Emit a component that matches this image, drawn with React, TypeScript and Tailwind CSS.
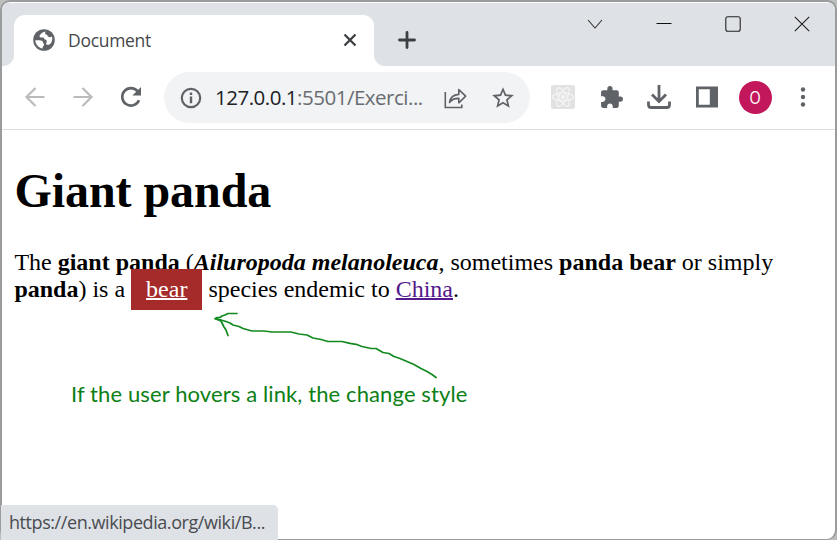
import React from "react";
import { MdExtension, MdStarBorder } from "react-icons/md";

const ui = "font-['Open_Sans','Noto_Sans',sans-serif]";

function TabStrip() {
  return (
    <div className="flex h-[63px] shrink-0 bg-[#dee1e6]">
      <div className="flex w-3 items-end">
        <div className="h-3 w-3 bg-white">
          <div className="h-3 w-3 rounded-br-[11px] bg-[#dee1e6]" />
        </div>
      </div>
      <div className="mt-3 flex w-[360px] items-center rounded-t-[11px] bg-white pt-px pl-[19px] pr-[16px] pb-[2px]">
        <svg className="h-[22px] w-[22px] shrink-0" viewBox="0 0 22 22">
          <circle cx="11" cy="11" r="10.8" fill="#5f6368" />
          <path fill="#fff" d="M12.8 2.5c-3 .3-3.6 1.6-5.2 2.7-1.5 1-1.5 3 .2 3.4h2.4c1 .2.8 1.8 2 2 1.8.2 1.8 2.2 1.2 3.2-.5 1-.3 1.8.8 2 1.8.2 3-.6 3.8-1.8 1.4-2.4 1.6-4.6.8-6.4-1 .8-2.8.8-3.6 0-1-.9-.8-2-2-2.2-1.4-.3-1.6-1.7-.4-2.9Z" />
          <path fill="#fff" d="M2.3 11.2c2.6 0 5.2.1 6.6.6 1.2.5.8 2 1.6 2.6 1 .7.7 2-.2 2.5-.8.4-.4 1.7-.7 2.6C5.6 18.9 2.5 15.5 2.3 11.2Z" />
        </svg>
        <span className={`ml-[13px] text-[17.5px] leading-6 tracking-[-0.3px] text-[#45474a] ${ui}`}>Document</span>
        <svg className="ml-auto h-4 w-4" viewBox="0 0 16 16" fill="none" stroke="#3c4043" strokeWidth="2.3">
          <path d="M2.5 2.5 13.5 13.5M13.5 2.5 2.5 13.5" />
        </svg>
      </div>
      <div className="flex w-3 items-end">
        <div className="h-3 w-3 bg-white">
          <div className="h-3 w-3 rounded-bl-[11px] bg-[#dee1e6]" />
        </div>
      </div>
      <svg className="ml-[11px] mt-[27px] h-5 w-5" viewBox="0 0 20 20" stroke="#3c4043" strokeWidth="2.8" strokeLinecap="round">
        <path d="M2.5 10h15M10 2.5v15" />
      </svg>
      <div className="ml-auto mr-[25px] mt-[13px] flex h-4 gap-[53px]">
        <svg className="h-4 w-4" viewBox="0 0 16 16" fill="none" stroke="#333" strokeWidth="1.1"><path d="m1 4 7 8 7-8" /></svg>
        <svg className="h-4 w-4" viewBox="0 0 16 16" stroke="#111" strokeWidth="1"><path d="M.5 7.5h15" /></svg>
        <svg className="h-4 w-4" viewBox="0 0 16 16" fill="none" stroke="#222" strokeWidth="1.1"><rect x=".8" y=".8" width="14.4" height="14.4" rx="2" /></svg>
        <svg className="h-4 w-4" viewBox="0 0 16 16" stroke="#222" strokeWidth="1.15"><path d="m.8.8 14.4 14.4M15.2.8.8 15.2" /></svg>
      </div>
    </div>
  );
}

function Toolbar() {
  return (
    <div className="flex h-16 shrink-0 items-center border-b border-[#dcdee1] pl-[22px] pb-px">
      <svg className="h-[22px] w-[22px]" viewBox="0 0 22 22" fill="none" stroke="#b9bbbd" strokeWidth="2.2">
        <path d="M20.5 11H3M11.5 2 2.5 11l9 9" />
      </svg>
      <svg className="ml-[26px] h-[22px] w-[22px]" viewBox="0 0 22 22" fill="none" stroke="#b9bbbd" strokeWidth="2.2">
        <path d="M1.5 11H19M10.5 2l9 9-9 9" />
      </svg>
      <svg className="ml-[26px] h-[22px] w-[22px]" viewBox="0 0 22 22" fill="none" stroke="#5f6368" strokeWidth="2.6">
        <path d="M17.6 5.2A8.7 8.7 0 1 0 19 14.2" />
        <path d="M21 .9v8.6h-8.6Z" fill="#5f6368" stroke="none" />
      </svg>
      <div className="ml-[22px] flex h-[51px] w-[366px] items-center rounded-full bg-[#f1f3f4] pl-[16px]">
        <svg className="mt-0.5 h-[22px] w-[22px]" viewBox="0 0 22 22" fill="#5f6368">
          <circle cx="11" cy="11" r="9.2" fill="none" stroke="#5f6368" strokeWidth="2.2" />
          <path d="M9.8 5.5h2.4v2.4H9.8ZM9.8 9.6h2.4v6.7H9.8Z" />
        </svg>
        <span className={`ml-[13px] whitespace-nowrap text-[20.5px] leading-7 tracking-[-0.49px] text-[#696c70] ${ui}`}>
          <span className="text-[#202124]">127.0.0.1</span>:5501/Exerci...
        </span>
      </div>
      <div className="-ml-[88px] flex w-[88px] items-center">
        <svg className="ml-px mt-px h-[25px] w-[26px]" viewBox="0 0 26 25" fill="none" stroke="#5f6368" strokeWidth="1.6">
          <path d="M2.3 7v15.5h16.5V19.5" />
          <path d="M6.5 17.5c.7-5 3.5-7.7 9.3-8.1V4.6l6.9 6.6-6.9 6.6v-4.4c-4.4-.2-7.1 1-9.3 4.1Z" strokeLinejoin="round" />
        </svg>
        <MdStarBorder className="ml-[21px] mt-0.5 h-[26px] w-[26px] text-[#5f6368]" />
      </div>
      <svg className="ml-[21px] h-6 w-6" viewBox="0 0 24 24">
        <rect width="24" height="24" rx="2" fill="#e2e2e2" />
        <g fill="none" stroke="#f7f7f7" strokeWidth="1.1">
          <ellipse cx="12" cy="12" rx="10.5" ry="4" />
          <ellipse cx="12" cy="12" rx="10.5" ry="4" transform="rotate(60 12 12)" />
          <ellipse cx="12" cy="12" rx="10.5" ry="4" transform="rotate(120 12 12)" />
        </g>
        <circle cx="12" cy="12" r="2" fill="#f7f7f7" />
      </svg>
      <MdExtension className="ml-[24px] h-[25px] w-[25px] text-[#5f6368]" />
      <svg className="ml-[23px] h-[26px] w-6" viewBox="0 0 24 26" fill="none" stroke="#5f6368" strokeWidth="2.8">
        <path d="M12 1v15M5 10.5l7 7 7-7" />
        <path d="M1.5 17.5v3.2q0 2.8 2.8 2.8h15.4q2.8 0 2.8-2.8v-3.2" />
      </svg>
      <svg className="ml-[25px] h-[22px] w-[22px]" viewBox="0 0 22 22">
        <path fill="#5f6368" fillRule="evenodd" d="M0 .5h22v21H0ZM2.8 3.2v15.6h11V3.2Z" />
      </svg>
      <div className={`ml-[21px] flex h-[33px] w-[33px] items-center justify-center rounded-full bg-[#c2185b] text-[18px] text-white ${ui}`}><span className="scale-x-80">O</span></div>
      <svg className="ml-[28px] h-[22px] w-[6px]" viewBox="0 0 6 22" fill="#5f6368">
        <circle cx="3" cy="3.5" r="2.2" /><circle cx="3" cy="11" r="2.2" /><circle cx="3" cy="18.5" r="2.2" />
      </svg>
    </div>
  );
}

export default function App() {
  return (
    <div className="relative h-[540px] w-[837px] overflow-hidden bg-[#bdbfbf]">
      <div className="flex h-[540px] w-[837px] flex-col overflow-hidden rounded-[10px] border-2 border-b border-[#999b9c] bg-white pt-px">
        <TabStrip />
        <Toolbar />
        <main className="px-[12.4px] font-['Liberation_Serif',serif] text-[24px] leading-[27px] text-black">
          <h1 className="pt-[33px] text-[48px] leading-[55px] tracking-[-0.05px] font-bold">Giant panda</h1>
          <p className="pt-[31px] whitespace-nowrap">
            The <b>giant panda</b> (<b><i>Ailuropoda melanoleuca</i></b>, sometimes <b>panda bear</b> or simply<br />
            <b>panda</b>) is a <a className="bg-[#a52a2a] px-[15px] pt-[7px] pb-[8px] text-white underline decoration-2">bear</a> species endemic to{" "}
            <a className="text-[#551a8b] underline decoration-2">China</a>.
          </p>
        </main>
      </div>
      <svg className="absolute left-[210px] top-[308px] h-[72px] w-[232px]" viewBox="210 308 232 72" fill="none" stroke="#138a20" strokeWidth="1.7" strokeLinejoin="round" strokeLinecap="round">
        <path d="M237 313.5h-9l-3 1.5-3 1-2 1.5h-3l-2 1.2 6 1.3 5 1.5 4 1.5 3 2 6 1.5 4 2 9 2.5h12l8 1h19l8 2 8 1 6 3 8 1.5 7 2h14l8 1.8 6 1 6 2.2 9 2h5l7 4 6 1 5 3 6 2 7 3 7 3 7 4 6 3 5 3 4 3" />
        <path d="m216 319 5 2 3 6 2 3 2 5.5" />
      </svg>
      <div className="absolute left-[71px] top-[380px] font-['Lato',sans-serif] text-[22px] leading-7 tracking-[0.115px] whitespace-nowrap text-[#0b8014]">If the user hovers a link, the change style</div>
      <div className={`absolute left-px top-[505px] h-[35px] w-[277px] rounded-tr-[5px] bg-[#dee1e6] pl-2 text-[18px] leading-[35px] tracking-[-0.43px] whitespace-nowrap text-[#494c50] ${ui}`}>https://en.wikipedia.org/wiki/B...</div>
    </div>
  );
}
